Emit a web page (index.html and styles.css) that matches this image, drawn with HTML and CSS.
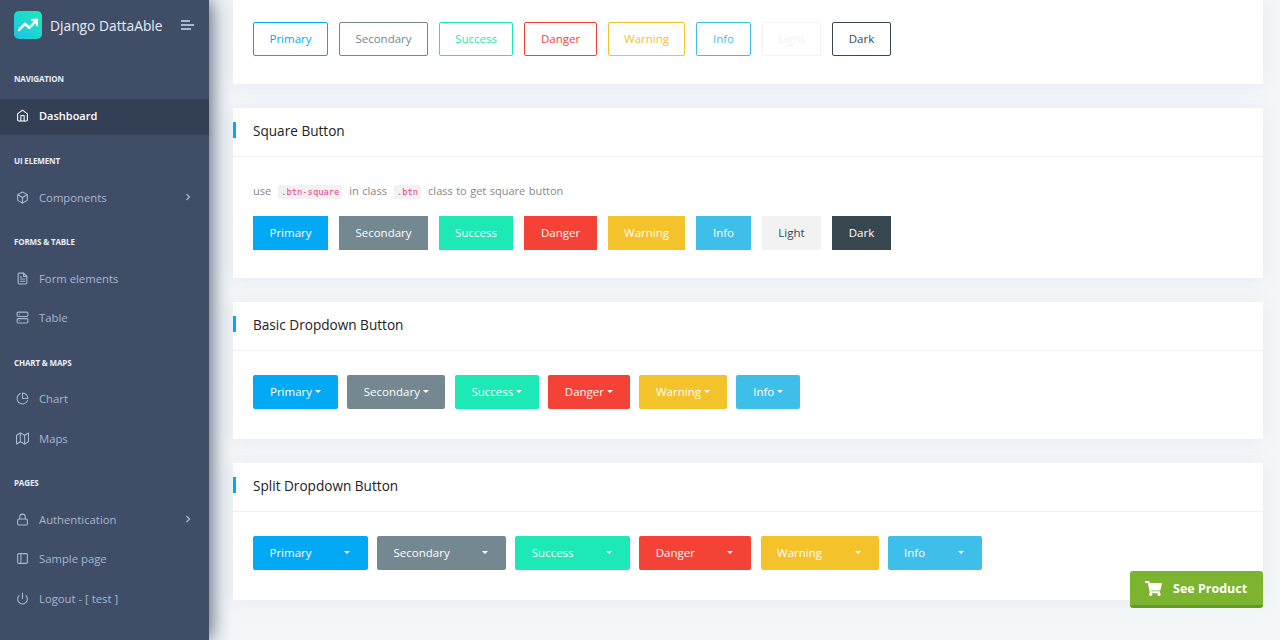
FILE: index.html

```html
<!DOCTYPE html>
<html lang="en">
<head>
    <meta charset="UTF-8">
    <meta name="viewport" content="width=device-width, initial-scale=1.0">
    <title>Django DattaAble - Buttons</title>
    <link rel="stylesheet" href="styles.css">
</head>
<body>

<div class="layout">
    <nav class="sidebar">
        <div class="brand">
            <span class="brand-logo">
                <svg viewBox="0 0 24 24" width="20" height="20"><polyline points="23 6 13.5 15.5 8.5 10.5 1 18"/><polyline points="17 6 23 6 23 12"/></svg>
            </span>
            <span class="brand-name">Django DattaAble</span>
            <span class="brand-toggle"><i class="bar-a"></i><i class="bar-b"></i><i class="bar-c"></i></span>
        </div>

        <div class="nav-label nav-label-first">Navigation</div>
        <a class="nav-item active">
            <svg class="nav-icon" viewBox="0 0 24 24"><path d="M3 9l9-7 9 7v11a2 2 0 0 1-2 2H5a2 2 0 0 1-2-2z"/><polyline points="9 22 9 12 15 12 15 22"/></svg>
            <span>Dashboard</span>
        </a>

        <div class="nav-label">UI Element</div>
        <a class="nav-item">
            <svg class="nav-icon" viewBox="0 0 24 24"><path d="M21 16V8a2 2 0 0 0-1-1.73l-7-4a2 2 0 0 0-2 0l-7 4A2 2 0 0 0 3 8v8a2 2 0 0 0 1 1.73l7 4a2 2 0 0 0 2 0l7-4A2 2 0 0 0 21 16z"/><polyline points="3.27 6.96 12 12.01 20.73 6.96"/><line x1="12" y1="22.08" x2="12" y2="12"/></svg>
            <span>Components</span>
            <svg class="nav-arrow" viewBox="0 0 24 24"><polyline points="9 18 15 12 9 6"/></svg>
        </a>

        <div class="nav-label">Forms &amp; Table</div>
        <a class="nav-item">
            <svg class="nav-icon" viewBox="0 0 24 24"><path d="M14 2H6a2 2 0 0 0-2 2v16a2 2 0 0 0 2 2h12a2 2 0 0 0 2-2V8z"/><polyline points="14 2 14 8 20 8"/><line x1="16" y1="13" x2="8" y2="13"/><line x1="16" y1="17" x2="8" y2="17"/><polyline points="10 9 9 9 8 9"/></svg>
            <span>Form elements</span>
        </a>
        <a class="nav-item">
            <svg class="nav-icon" viewBox="0 0 24 24"><rect x="2" y="2" width="20" height="8" rx="2" ry="2"/><rect x="2" y="14" width="20" height="8" rx="2" ry="2"/><line x1="6" y1="6" x2="6.01" y2="6"/><line x1="6" y1="18" x2="6.01" y2="18"/></svg>
            <span>Table</span>
        </a>

        <div class="nav-label">Chart &amp; Maps</div>
        <a class="nav-item">
            <svg class="nav-icon" viewBox="0 0 24 24"><path d="M21.21 15.89A10 10 0 1 1 8 2.83"/><path d="M22 12A10 10 0 0 0 12 2v10z"/></svg>
            <span>Chart</span>
        </a>
        <a class="nav-item">
            <svg class="nav-icon" viewBox="0 0 24 24"><polygon points="1 6 1 22 8 18 16 22 23 18 23 2 16 6 8 2 1 6"/><line x1="8" y1="2" x2="8" y2="18"/><line x1="16" y1="6" x2="16" y2="22"/></svg>
            <span>Maps</span>
        </a>

        <div class="nav-label">Pages</div>
        <a class="nav-item">
            <svg class="nav-icon" viewBox="0 0 24 24"><rect x="3" y="11" width="18" height="11" rx="2" ry="2"/><path d="M7 11V7a5 5 0 0 1 10 0v4"/></svg>
            <span>Authentication</span>
            <svg class="nav-arrow" viewBox="0 0 24 24"><polyline points="9 18 15 12 9 6"/></svg>
        </a>
        <a class="nav-item">
            <svg class="nav-icon" viewBox="0 0 24 24"><rect x="3" y="3" width="18" height="18" rx="2" ry="2"/><line x1="9" y1="3" x2="9" y2="21"/></svg>
            <span>Sample page</span>
        </a>
        <a class="nav-item">
            <svg class="nav-icon" viewBox="0 0 24 24"><path d="M18.36 6.64a9 9 0 1 1-12.73 0"/><line x1="12" y1="2" x2="12" y2="12"/></svg>
            <span>Logout - [ test ]</span>
        </a>
    </nav>

    <main class="content">
        <section class="card card-top">
            <div class="card-body btn-row">
                <button class="btn outline-primary">Primary</button>
                <button class="btn outline-secondary">Secondary</button>
                <button class="btn outline-success">Success</button>
                <button class="btn outline-danger">Danger</button>
                <button class="btn outline-warning">Warning</button>
                <button class="btn outline-info">Info</button>
                <button class="btn outline-light">Light</button>
                <button class="btn outline-dark">Dark</button>
            </div>
        </section>

        <section class="card">
            <div class="card-header"><h5>Square Button</h5></div>
            <div class="card-body">
                <p class="hint">use <code>.btn-square</code> in class <code>.btn</code> class to get square button</p>
                <div class="btn-row">
                    <button class="btn square primary">Primary</button>
                    <button class="btn square secondary">Secondary</button>
                    <button class="btn square success">Success</button>
                    <button class="btn square danger">Danger</button>
                    <button class="btn square warning">Warning</button>
                    <button class="btn square info">Info</button>
                    <button class="btn square light">Light</button>
                    <button class="btn square dark">Dark</button>
                </div>
            </div>
        </section>

        <section class="card">
            <div class="card-header"><h5>Basic Dropdown Button</h5></div>
            <div class="card-body drop-row basic">
                <button class="btn primary">Primary<i class="caret"></i></button>
                <button class="btn secondary">Secondary<i class="caret"></i></button>
                <button class="btn success">Success<i class="caret"></i></button>
                <button class="btn danger">Danger<i class="caret"></i></button>
                <button class="btn warning">Warning<i class="caret"></i></button>
                <button class="btn info">Info<i class="caret"></i></button>
            </div>
        </section>

        <section class="card">
            <div class="card-header"><h5>Split Dropdown Button</h5></div>
            <div class="card-body drop-row">
                <div class="split"><button class="btn primary">Primary</button><button class="btn split-toggle primary"><i class="caret"></i></button></div>
                <div class="split"><button class="btn secondary">Secondary</button><button class="btn split-toggle secondary"><i class="caret"></i></button></div>
                <div class="split"><button class="btn success">Success</button><button class="btn split-toggle success"><i class="caret"></i></button></div>
                <div class="split"><button class="btn danger">Danger</button><button class="btn split-toggle danger"><i class="caret"></i></button></div>
                <div class="split"><button class="btn warning">Warning</button><button class="btn split-toggle warning"><i class="caret"></i></button></div>
                <div class="split"><button class="btn info">Info</button><button class="btn split-toggle info split-toggle-line"><i class="caret"></i></button></div>
            </div>
        </section>
    </main>
</div>

<a class="see-product">
    <svg viewBox="0 0 576 512" width="17" height="15"><path d="M528 301l47-208c3-15-8-29-23-29H159l-9-45C148 8 138 0 126 0H24C11 0 0 11 0 24v16c0 13 11 24 24 24h70l70 343c-17 10-28 28-28 49 0 31 25 56 56 56s56-25 56-56c0-16-6-30-17-40h210c-11 10-17 24-17 40 0 31 25 56 56 56s56-25 56-56c0-22-13-41-32-50l5-24c3-15-8-29-23-29H212l-7-32h299c11 0 21-8 24-19z"/></svg>
    <span>See Product</span>
</a>

</body>
</html>
```

FILE: styles.css

```css
* {
    box-sizing: border-box;
}
html, body {
    height: 640px;
    overflow: hidden;
}
body {
    margin: 0;
    font-family: "Open Sans", sans-serif;
    font-size: 11px;
    color: #888888;
    background-color: #f4f7fa;
}
.layout {
    display: flex;
    height: 640px;
}

/* sidebar */
.sidebar {
    flex: 0 0 209px;
    background-color: #3f4d67;
    color: #a9b7d0;
    box-shadow: 1px 0 20px 0 #3f4d67;
    position: relative;
}
.brand {
    display: flex;
    align-items: center;
    height: 50px;
    padding-left: 14px;
}
.brand-logo {
    display: flex;
    align-items: center;
    justify-content: center;
    width: 28px;
    height: 28px;
    border-radius: 5px;
    background: linear-gradient(-135deg, #1de9b6 0%, #1dc4e9 100%);
}
.brand-logo svg {
    fill: none;
    stroke: #ffffff;
    stroke-width: 3;
    stroke-linecap: round;
    stroke-linejoin: round;
}
.brand-name {
    margin-left: 8px;
    font-size: 13.8px;
    color: #e8edf7;
}
.brand-toggle {
    display: flex;
    flex-direction: column;
    gap: 2px;
    margin-left: 18px;
}
.brand-toggle i {
    display: block;
    height: 2px;
    background-color: #a9b7d0;
}
.bar-a { width: 9px; }
.bar-b { width: 13px; }
.bar-c { width: 10px; }
.nav-label {
    height: 14px;
    line-height: 14px;
    margin: 19px 0 12px;
    padding-left: 14px;
    font-size: 8px;
    font-weight: 700;
    letter-spacing: -0.15px;
    text-transform: uppercase;
    color: #e8edf7;
}
.nav-label-first {
    margin: 22px 0 13px;
}
.nav-item {
    display: flex;
    align-items: center;
    height: 36px;
    margin-bottom: 3.5px;
    padding: 0 15.5px 2px 16px;
    font-size: 11.3px;
}
.nav-item.active {
    padding-bottom: 3px;
    background-color: #333f54;
    color: #ffffff;
    font-size: 11px;
    font-weight: 600;
}
.nav-icon {
    width: 13px;
    height: 13px;
    margin-right: 10px;
    fill: none;
    stroke: currentColor;
    stroke-width: 2;
    stroke-linecap: round;
    stroke-linejoin: round;
}
.nav-arrow {
    width: 12px;
    height: 12px;
    margin-left: auto;
    fill: none;
    stroke: currentColor;
    stroke-width: 2.5;
}

/* content */
.content {
    flex: 1;
    padding: 0 17px 0 24px;
}
.card {
    background-color: #ffffff;
    margin-bottom: 24px;
    box-shadow: 0 1px 20px 0 rgba(69, 90, 100, 0.08);
}
.card-header {
    height: 49px;
    padding: 0 20px 4px;
    display: flex;
    align-items: center;
    border-bottom: 1px solid #f1f1f1;
}
.card-header h5 {
    position: relative;
    margin: 0;
    font-size: 13.6px;
    font-weight: 400;
    color: #222222;
}
.card-header h5::after {
    content: "";
    position: absolute;
    left: -20px;
    top: 50%;
    margin-top: -8px;
    width: 3px;
    height: 16px;
    background-color: #04a9f5;
}
.card-body {
    padding: 24px 20px 28px;
}
.card-top .card-body {
    padding-top: 22px;
}
.hint {
    margin: 0 0 14px;
    line-height: 20px;
    word-spacing: 0.6px;
}
code {
    margin: 0 3.5px;
    padding: 2px 3px;
    border-radius: 2px;
    font-family: "DejaVu Sans Mono", monospace;
    font-size: 8.8px;
    word-spacing: 0;
    color: #e83e8c;
    background-color: #f2f2f2;
}
.btn-row {
    display: flex;
    gap: 11px;
}
.drop-row {
    display: flex;
    gap: 9.1px;
    padding-bottom: 30px;
}
.drop-row.basic {
    gap: 9.4px;
}
.btn {
    height: 34px;
    padding: 0 0 2px;
    border: 1px solid transparent;
    border-radius: 2px;
    font-family: inherit;
    font-size: 11.5px;
    color: #ffffff;
    background: none;
}
.square {
    border-radius: 0;
}
.primary { background-color: #04a9f5; }
.secondary { background-color: #748892; }
.success { background-color: #1de9b6; }
.danger { background-color: #f44236; }
.warning { background-color: #f4c22b; }
.info { background-color: #3ebfea; }
.light { background-color: #f2f2f2; color: #37474f; }
.dark { background-color: #37474f; }
.outline-primary { border-color: #04a9f5; color: #04a9f5; }
.outline-secondary { border-color: #748892; color: #748892; }
.outline-success { border-color: #1de9b6; color: #1de9b6; }
.outline-danger { border-color: #f44236; color: #f44236; }
.outline-warning { border-color: #f4c22b; color: #f4c22b; }
.outline-info { border-color: #3ebfea; color: #3ebfea; }
.outline-light { border-color: #f2f2f2; color: #f2f2f2; }
.outline-dark { border-color: #37474f; color: #37474f; }

/* button widths per row */
.btn-row .primary, .outline-primary { width: 75px; }
.btn-row .secondary, .outline-secondary { width: 89px; }
.btn-row .success, .outline-success { width: 74px; }
.btn-row .danger, .outline-danger { width: 73px; }
.btn-row .warning, .outline-warning { width: 77px; }
.btn-row .info, .outline-info { width: 55px; }
.btn-row .light, .outline-light { width: 59px; }
.btn-row .dark, .outline-dark { width: 59px; }
.basic .primary { width: 85px; }
.basic .secondary { width: 98px; }
.basic .success { width: 84px; }
.basic .danger { width: 81.5px; }
.basic .warning { width: 87.8px; }
.basic .info { width: 64px; }
.split .primary { width: 75px; }
.split .secondary { width: 89px; }
.split .success { width: 75px; }
.split .danger { width: 72.15px; }
.split .warning { width: 78px; }
.split .info { width: 54px; }
.caret {
    display: inline-block;
    margin-left: 3px;
    vertical-align: 3px;
    border-top: 3.5px solid #ffffff;
    border-left: 3.5px solid transparent;
    border-right: 3.5px solid transparent;
}
.split {
    display: flex;
}
.split .btn:first-child {
    border-radius: 2px 0 0 2px;
}
.split .split-toggle {
    width: 40px;
    padding: 0 2px 2px 0;
    border: 0;
    border-radius: 0 2px 2px 0;
}
.split .split-toggle-line {
    border-left: 1px solid rgba(0, 0, 0, 0.02);
}
.split-toggle .caret {
    margin-left: 0;
}

/* floating button */
.see-product {
    position: fixed;
    left: 1130px;
    top: 571px;
    display: flex;
    align-items: center;
    width: 133px;
    height: 37px;
    padding-left: 15px;
    border-bottom: 3px solid #5f9a23;
    border-radius: 3px;
    font-size: 12.5px;
    font-weight: 700;
    color: #ffffff;
    background-color: #7cb32f;
}
.see-product svg {
    fill: #ffffff;
    margin-right: 11px;
}
```
